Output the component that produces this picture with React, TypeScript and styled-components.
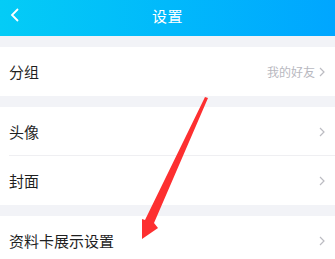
import styled, { createGlobalStyle } from "styled-components";

const GlobalStyle = createGlobalStyle`
  html, body {
    margin: 0;
    padding: 0;
    background: #f2f3f7;
    font-family: "Noto Sans CJK SC", "Noto Sans", sans-serif;
    overflow: hidden;
  }
`;

const Page = styled.div`
  position: relative;
  width: 335px;
  height: 259px;
  overflow: hidden;
  background: #f2f3f7;
`;

const Header = styled.div`
  height: 36px;
  box-sizing: border-box;
  padding-bottom: 6px;
  display: flex;
  align-items: center;
  justify-content: center;
  position: relative;
  background: linear-gradient(90deg, #04ccf6 0%, #01b9fb 50%, #00a6ff 100%);
`;

const BackBtn = styled.div`
  position: absolute;
  left: 9px;
  top: 8px;
  width: 12px;
  height: 14px;
  display: flex;
`;

const Title = styled.div`
  color: #ffffff;
  font-size: 15px;
  letter-spacing: 0.5px;
`;

const Group = styled.div`
  margin-top: 11px;
  background: #ffffff;
`;

const Row = styled.div<{ $divider?: boolean }>`
  height: 49px;
  display: flex;
  align-items: center;
  padding: 0 10px 0 9px;
  position: relative;
  ${p =>
    p.$divider &&
    `
    &::after {
      content: "";
      position: absolute;
      left: 9px;
      right: 0;
      bottom: 0;
      height: 1px;
      background: #efeff2;
    }
  `}
`;

const Label = styled.div`
  flex: 1;
  color: #1f1f1f;
  font-size: 15px;
`;

const Value = styled.div`
  color: #b8b8c0;
  font-size: 12px;
  margin-right: 4px;
`;

const Chevron = () => (
  <svg width="6" height="10" viewBox="0 0 6 10">
    <path d="M1 1 L5 5 L1 9" fill="none" stroke="#bcbcc2" strokeWidth="1.2" />
  </svg>
);

const Arrow = styled.svg`
  position: absolute;
  left: 0;
  top: 0;
  pointer-events: none;
`;

export default function App() {
  return (
    <Page>
      <GlobalStyle />
      <Header>
        <BackBtn>
          <svg width="11" height="14" viewBox="0 0 11 14">
            <path d="M9 1 L3 7 L9 13" fill="none" stroke="#ffffff" strokeWidth="1.8" />
          </svg>
        </BackBtn>
        <Title>设置</Title>
      </Header>
      <Group>
        <Row>
          <Label>分组</Label>
          <Value>我的好友</Value>
          <Chevron />
        </Row>
      </Group>
      <Group>
        <Row $divider>
          <Label>头像</Label>
          <Chevron />
        </Row>
        <Row>
          <Label>封面</Label>
          <Chevron />
        </Row>
      </Group>
      <Group>
        <Row>
          <Label>资料卡展示设置</Label>
          <Chevron />
        </Row>
      </Group>
      <Arrow width="335" height="259" viewBox="0 0 335 259">
        <path
          d="M208 98 L154 223 L158 228 L142 239 L142 219 L145 220 L205 97 Z"
          fill="#fd2f30"
        />
      </Arrow>
    </Page>
  );
}
